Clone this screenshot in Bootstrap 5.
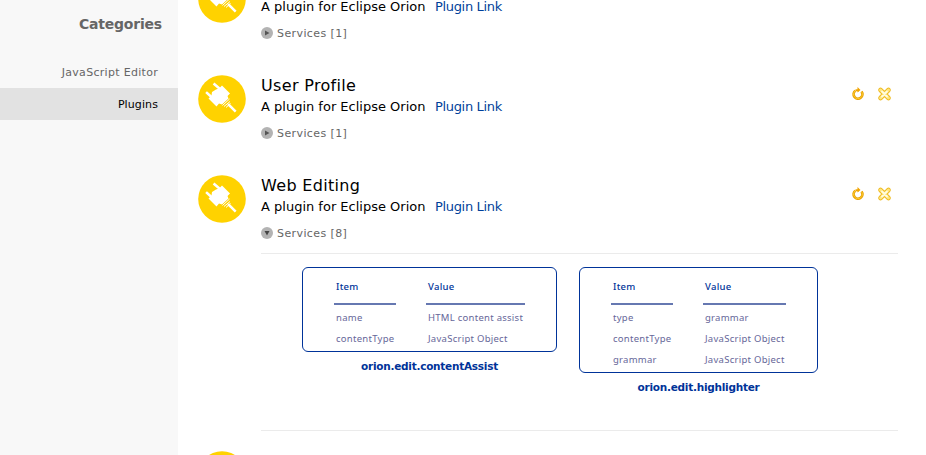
<!DOCTYPE html>
<html lang="en">
<head>
<meta charset="utf-8">
<meta name="viewport" content="width=device-width, initial-scale=1">
<title>Plugins</title>
<link href="https://cdn.jsdelivr.net/npm/bootstrap@5.3.0/dist/css/bootstrap.min.css" rel="stylesheet">
<style>
body{font-family:Verdana,"DejaVu Sans",sans-serif;color:#000;height:455px;background:#fff}
.side{width:178px;background:#f8f8f8;color:#666}
.side-title{font-size:14px;letter-spacing:-.2px;line-height:20px;padding:14px 16px 0 0;font-weight:bold;margin-bottom:22px}
.side a{font-size:11px;letter-spacing:.3px;line-height:33px;height:32px;padding-right:20px;color:#666}
.side a.current{background:#e2e2e2;color:#000;letter-spacing:.1px}
.plugins{padding-left:20px;width:720px;margin-top:-25px}
.plugin{height:100px;gap:15px}
.plugin.expanded{height:276px}
.logo{width:48px;height:48px}
.name{font-size:16px;letter-spacing:.33px;line-height:20px;height:20px;padding-top:1px}
.desc{font-size:13px;line-height:20px;gap:9.5px;margin-top:2px}
.desc a{color:#003f9a;letter-spacing:-.33px}
.svc{font-size:11px;letter-spacing:.4px;line-height:14px;color:#666;margin-top:10px;gap:4px}
.svc svg{margin-bottom:2px}
.tools{padding:11px 6px 0 0;gap:12px}
.services{border-top:1px solid #ebebeb;border-bottom:1px solid #ebebeb;height:178px;margin-top:12px;padding:13px 0 0 41px;gap:22px}
.box{border:1px solid #039;border-radius:6px;font-family:"Noto Sans",sans-serif;font-size:9.5px;letter-spacing:.27px;line-height:21px;color:#669;padding:4px 31px 2px}
.box .cells{display:grid;column-gap:30px}
.wide .cells{grid-template-columns:62px 99px}
.slim .cells{grid-template-columns:62px 83px}
.wide .box{width:255px}.slim .box{width:239px}
.cells span{padding-left:2px;white-space:nowrap}
.cells .th{color:#039;font-weight:500;line-height:30px;height:33px;border-bottom:2px solid #6678b1;margin-bottom:2px}
.svc-name{font-size:10.5px;letter-spacing:-.25px;font-weight:bold;color:#039;line-height:14px;margin-top:7px}
.next-name{padding-top:2px}
</style>
<script src="https://cdn.jsdelivr.net/npm/bootstrap@5.3.0/dist/js/bootstrap.bundle.min.js"></script>
</head>
<body class="d-flex overflow-hidden">
<svg class="d-none">
<symbol id="plug" viewBox="0 0 48 48"><circle cx="24" cy="24" r="23.8" fill="#ffd200"/><path d="M16.500 9.300 22 14M9 18 14.500 23M31 30l5.800 5.800" stroke="#fff" stroke-width="2.5" stroke-linecap="square" fill="none"/><path fill="#fff" d="M24 10.500 32 18.500 29.500 21 30.500 23.500 24 29.500 21 28.500 18.500 31.500 10.500 23.500 13.500 20.500 14 17 18 14.500 21 13.500z"/><path d="m24.500 30.500 7-6.500M26 31.500l6-5M28 32.500l4.500-4" stroke="#fff" stroke-width="1"/></symbol>
<symbol id="reload" viewBox="0 0 14 16"><path d="M4.300 4.800A4.400 4.400 0 1 0 10.500 5.600" fill="none" stroke="#e8a000" stroke-width="2.700"/><path d="M4.300 4.800A4.400 4.400 0 1 0 10.500 5.600" fill="none" stroke="#ffce33" stroke-width="1"/><path d="M4.500 4.300H8" stroke="#f0a400" stroke-width="2"/><path d="M6.500 1 9.500 4 6.500 6.500z" fill="#f0a400"/></symbol>
<symbol id="remove" viewBox="0 0 15 16"><path d="m3.500 4 8 8M11.500 4l-8 8" stroke="#eebb22" stroke-width="4.600" stroke-linecap="round"/><path d="m3.500 4 8 8M11.500 4l-8 8" stroke="#ffe680" stroke-width="2.800" stroke-linecap="round"/><path d="m5 5.500 5 5M10 5.500l-5 5" stroke="#fffbe0" stroke-width="1.800" stroke-linecap="round"/></symbol>
<symbol id="closed" viewBox="0 0 12 12"><circle cx="6" cy="6" r="6" fill="#b3b3b3"/><path d="M4 3.500 8.500 6 4 8.500z" fill="#555"/></symbol>
<symbol id="open" viewBox="0 0 12 12"><circle cx="6" cy="6" r="6" fill="#b3b3b3"/><path d="M3.500 4h5L6 8.500z" fill="#444"/></symbol>
</svg>
<nav class="side flex-shrink-0 h-100 text-end">
<div class="side-title">Categories</div>
<a class="d-block text-decoration-none">JavaScript Editor</a>
<a class="d-block text-decoration-none current">Plugins</a>
</nav>
<main class="plugins flex-shrink-0">
<section class="plugin d-flex">
<svg class="logo flex-shrink-0"><use href="#plug"/></svg>
<div class="flex-grow-1"><div class="name"></div><div class="desc d-flex"><span>A plugin for Eclipse Orion</span><a class="text-decoration-none">Plugin Link</a></div><div class="svc d-flex align-items-center"><svg width="12" height="12"><use href="#closed"/></svg>Services [1]</div></div>
</section>
<section class="plugin d-flex">
<svg class="logo flex-shrink-0"><use href="#plug"/></svg>
<div class="flex-grow-1"><div class="d-flex justify-content-between"><div><div class="name">User Profile</div><div class="desc d-flex"><span>A plugin for Eclipse Orion</span><a class="text-decoration-none">Plugin Link</a></div></div><div class="tools d-flex"><svg width="14" height="16"><use href="#reload"/></svg><svg width="15" height="16"><use href="#remove"/></svg></div></div><div class="svc d-flex align-items-center"><svg width="12" height="12"><use href="#closed"/></svg>Services [1]</div></div>
</section>
<section class="plugin expanded d-flex">
<svg class="logo flex-shrink-0"><use href="#plug"/></svg>
<div class="flex-grow-1"><div class="d-flex justify-content-between"><div><div class="name">Web Editing</div><div class="desc d-flex"><span>A plugin for Eclipse Orion</span><a class="text-decoration-none">Plugin Link</a></div></div><div class="tools d-flex"><svg width="14" height="16"><use href="#reload"/></svg><svg width="15" height="16"><use href="#remove"/></svg></div></div><div class="svc d-flex align-items-center"><svg width="12" height="12"><use href="#open"/></svg>Services [8]</div>
<div class="services d-flex align-items-start">
<div class="wide text-center"><div class="box text-start"><div class="cells"><span class="th">Item</span><span class="th">Value</span><span>name</span><span>HTML content assist</span><span>contentType</span><span>JavaScript Object</span></div></div><div class="svc-name">orion.edit.contentAssist</div></div>
<div class="slim text-center"><div class="box text-start"><div class="cells"><span class="th">Item</span><span class="th">Value</span><span>type</span><span>grammar</span><span>contentType</span><span>JavaScript Object</span><span>grammar</span><span>JavaScript Object</span></div></div><div class="svc-name">orion.edit.highlighter</div></div>
</div></div>
</section>
<section class="plugin d-flex">
<svg class="logo flex-shrink-0"><use href="#plug"/></svg>
<div class="name next-name">Esprima JavaScript</div>
</section>
</main>
</body>
</html>
